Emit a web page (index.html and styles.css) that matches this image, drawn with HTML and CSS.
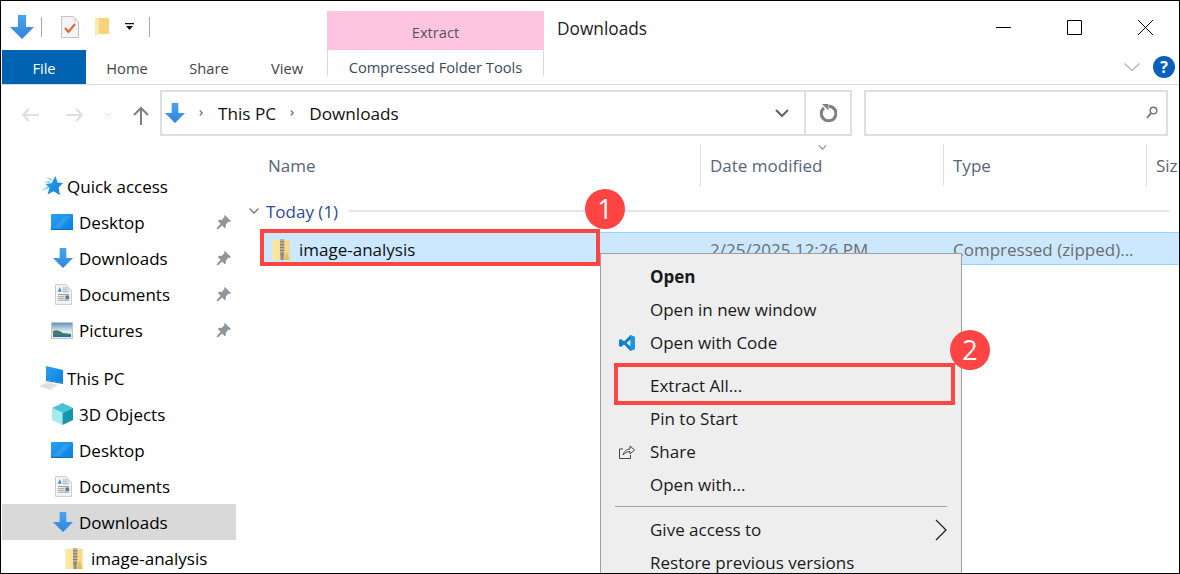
FILE: index.html
```html
<!DOCTYPE html>
<html lang="en">
<head>
  <meta charset="UTF-8">
  <title>Downloads</title>
  <link rel="stylesheet" href="styles.css">
</head>
<body>
<svg class="defs" aria-hidden="true">
  <defs>
    <linearGradient id="blue" x1="0" y1="0" x2="0" y2="1"><stop offset="0" stop-color="#4aa3f0"/><stop offset="1" stop-color="#2f86dc"/></linearGradient>
    <linearGradient id="screen" x1="0" y1="0" x2="1" y2="1"><stop offset="0" stop-color="#2aa2f2"/><stop offset="1" stop-color="#0a7fe0"/></linearGradient>
    <linearGradient id="sky" x1="0" y1="0" x2="0" y2="1"><stop offset="0" stop-color="#5f8fb8"/><stop offset=".55" stop-color="#dfeaf2"/><stop offset="1" stop-color="#dfeaf2"/></linearGradient>
    <linearGradient id="yellow" x1="0" y1="0" x2="1" y2="0"><stop offset="0" stop-color="#fde9a4"/><stop offset="1" stop-color="#f8d77e"/></linearGradient>
    <symbol id="i-down" viewBox="0 0 24 24"><path fill="url(#blue)" d="M8 0h8v12h8L12 24 0 12h8z"/></symbol>
    <symbol id="i-desktop" viewBox="0 0 22 16"><rect width="22" height="16" rx="1" fill="url(#screen)"/><path fill="#4fb4f6" d="M2 14 14 2h6L9 14z" opacity=".35"/><path fill="#0b6fc4" d="M0 15h22v1H0z"/></symbol>
    <symbol id="i-doc" viewBox="0 0 18 22"><path fill="#f5f5f5" stroke="#c9c9c9" d="M.5.5h11l6 6v15H.5z"/><path fill="#d8d8d8" d="M11.500.5v6h6z"/><path fill="#3b8fe0" d="M3 8l2-5 2 5z"/><path stroke="#8aa9c6" d="M8 4h3M8 6h4M8 8h7"/><path stroke="#9a9a9a" d="M3 11h12M3 13h7M3 15h7M3 17h12"/><rect x="11" y="12" width="4" height="4" fill="#4f7f9c"/></symbol>
    <symbol id="i-pics" viewBox="0 0 22 17"><rect x=".5" y=".5" width="21" height="16" fill="url(#sky)" stroke="#c4c4c4"/><path fill="#4a7a58" d="M2 9c4-2 7 0 10 2l8 1v3H2z"/><path fill="#2f6fa0" d="M2 13h18v2H2z"/></symbol>
    <symbol id="i-zip" viewBox="0 0 18 22"><path fill="url(#yellow)" d="M0 1h18v21H0z"/><path fill="#eebf4e" d="M15 13l3 9h-6z"/><rect x="8" y="0" width="4.500" height="22" fill="#b5b0a0"/><path stroke="#7d786c" d="M8 3h4.500M8 6h4.500M8 9h4.500M8 12h4.500"/><circle cx="10.250" cy="16" r="2" fill="#8f8a7e"/><rect x="9.250" y="17" width="2" height="5" fill="#8f8a7e"/></symbol>
    <symbol id="i-pin" viewBox="0 0 16 16"><path fill="#8e979e" d="M9.500 0 16 6.500l-1.300.9-1.200-.4-3 3 .1 2.700-1.300 1.300-2.900-2.900L2 15.500.5 14l4.400-4.700L2 6.400l1.300-1.300 2.700.1 3-3-.4-1.300z"/></symbol>
    <symbol id="i-chev" viewBox="0 0 10 6"><path fill="none" stroke="currentColor" stroke-width="1.300" d="M.5.5 5 5 9.500.5"/></symbol>
    <symbol id="i-crumb" viewBox="0 0 5 8"><path fill="none" stroke="#808080" stroke-width="1.800" d="M1 .8 4 4 1 7.200"/></symbol>
  </defs>
</svg>

<div class="window">
  <header class="ribbon">
    <div class="ribbon-left">
      <div class="qat">
        <svg class="qat-arrow"><use href="#i-down"/></svg>
        <span class="qat-sep"></span>
        <svg class="qat-doc" viewBox="0 0 18 22">
          <path fill="#f4f4f4" stroke="#c4c4c4" d="M.5.5h12l5 5v16H.5z"/>
          <path fill="#dcdcdc" d="M12.500.5v5h5z"/>
          <path fill="none" stroke="#e8622a" stroke-width="2" d="M4 12l3.500 4L14 8"/>
        </svg>
        <svg class="qat-folder" viewBox="0 0 14 20">
          <path fill="#f6d27a" d="M3 1h11v16H3z"/>
          <path fill="#fdeab0" d="M0 0l4 2v14.500L0 20z"/>
        </svg>
        <svg class="qat-drop" viewBox="0 0 9 7"><path d="M0 0h9v1.200H0zM1 3h7L4.500 7z" fill="#111"/></svg>
        <span class="qat-sep qat-sep-last"></span>
      </div>
      <nav class="tabs">
        <span class="tab tab-file">File</span>
        <span class="tab tab-home">Home</span>
        <span class="tab tab-share">Share</span>
        <span class="tab tab-view">View</span>
      </nav>
    </div>
    <div class="ribbon-context">
      <div class="context-title">Extract</div>
      <div class="context-tab">Compressed Folder Tools</div>
    </div>
    <div class="ribbon-right">
      <div class="title-row">
        <span class="title">Downloads</span>
        <div class="controls">
          <svg viewBox="0 0 15 15"><path stroke="#000" d="M0 7.500h15"/></svg>
          <svg viewBox="0 0 15 15"><path fill="none" stroke="#000" d="M.5.500h14v14H.5z"/></svg>
          <svg viewBox="0 0 15 15"><path stroke="#000" d="M0 0l15 15M15 0 0 15"/></svg>
        </div>
      </div>
      <div class="help-row">
        <svg class="ribbon-chev" viewBox="0 0 16 8"><path fill="none" stroke="#b8b8b8" stroke-width="1.500" d="M.5.500 8 7.500 15.500.500"/></svg>
        <span class="help">?</span>
      </div>
    </div>
  </header>

  <div class="address-row">
    <div class="nav-btns">
      <svg class="nav-back" viewBox="0 0 18 14"><path fill="none" stroke="#dedede" stroke-width="2" d="M18 7H2M8 1 2 7l6 6"/></svg>
      <svg class="nav-forward" viewBox="0 0 18 14"><path fill="none" stroke="#dedede" stroke-width="2" d="M0 7h16M10 1l6 6-6 6"/></svg>
      <svg class="nav-recent"><use href="#i-chev"/></svg>
      <svg class="nav-up" viewBox="0 0 16 19"><path fill="none" stroke="#808080" stroke-width="2" d="M8 19V2M1 9l7-7 7 7"/></svg>
    </div>
    <div class="address">
      <svg class="addr-icon"><use href="#i-down"/></svg>
      <svg class="crumb"><use href="#i-crumb"/></svg>
      <span class="addr-text">This PC</span>
      <svg class="crumb"><use href="#i-crumb"/></svg>
      <span class="addr-text">Downloads</span>
      <svg class="addr-drop" viewBox="0 0 14 9"><path fill="none" stroke="#666" stroke-width="2.200" d="M1 1l6 6 6-6"/></svg>
      <div class="refresh">
        <svg viewBox="0 0 18 18"><path fill="none" stroke="#808080" stroke-width="3" d="M5 3.800a7.300 7.300 0 1 0 5-1.600"/><path fill="#808080" d="M3 0h6.500v6.500z"/></svg>
      </div>
    </div>
    <div class="search">
      <svg viewBox="0 0 12 14"><circle cx="7.500" cy="4.500" r="3.300" fill="none" stroke="#777" stroke-width="1.500"/><path stroke="#777" stroke-width="2" d="M5 7l-4 5"/></svg>
    </div>
  </div>

  <div class="main">
    <aside class="tree">
      <div class="tree-group">
        <div class="tree-item tree-root">
          <svg class="ic-star" viewBox="0 0 22 20"><path fill="#8cc6f2" d="M0 15 8 9v3zM2 6l7-1v2zM5 1l6 2-1 2z"/><path fill="url(#screen)" d="M14.500 0l2 6.500 5.500.5-4.500 4.500 1.500 7.500-6.500-3.800-6 3.300 2-7-4-3.500 6-.7z"/></svg>
          Quick access
        </div>
        <div class="tree-item"><svg class="ic-desk"><use href="#i-desktop"/></svg>Desktop<svg class="pin"><use href="#i-pin"/></svg></div>
        <div class="tree-item"><svg class="ic-down"><use href="#i-down"/></svg>Downloads<svg class="pin"><use href="#i-pin"/></svg></div>
        <div class="tree-item"><svg class="ic-doc"><use href="#i-doc"/></svg>Documents<svg class="pin"><use href="#i-pin"/></svg></div>
        <div class="tree-item"><svg class="ic-pics"><use href="#i-pics"/></svg>Pictures<svg class="pin"><use href="#i-pin"/></svg></div>
      </div>
      <div class="tree-group">
        <div class="tree-item tree-root">
          <svg class="ic-pc" viewBox="0 0 24 24"><path fill="url(#screen)" d="M7 0l17 4v13L7 14z"/><path fill="#0b6fc4" d="M7 14l17 3v1L7 15z"/><path fill="#dde1e4" d="M0 20l9-4 10 3-8 5z"/></svg>
          This PC
        </div>
        <div class="tree-item">
          <svg class="ic-3d" viewBox="0 0 21 22"><path fill="#48c3d8" d="M10.500 0 21 5 10.500 10 0 5z"/><path fill="#a6ecec" d="M0 5l10.500 5v12L0 17z"/><path fill="#1396ad" d="M21 5 10.500 10v12L21 17z"/></svg>
          3D Objects
        </div>
        <div class="tree-item"><svg class="ic-desk"><use href="#i-desktop"/></svg>Desktop</div>
        <div class="tree-item"><svg class="ic-doc"><use href="#i-doc"/></svg>Documents</div>
        <div class="tree-item tree-selected"><svg class="ic-down"><use href="#i-down"/></svg>Downloads</div>
        <div class="tree-item tree-child"><svg class="ic-zip"><use href="#i-zip"/></svg>image-analysis</div>
      </div>
    </aside>

    <section class="files">
      <div class="col-heads">
        <span class="col-head col-name">Name</span>
        <span class="col-head col-date">Date modified<svg class="sort"><use href="#i-chev"/></svg></span>
        <span class="col-head col-type">Type</span>
        <span class="col-head col-size">Siz</span>
      </div>
      <div class="group">
        <svg class="group-chev"><use href="#i-chev"/></svg>
        <span class="group-name">Today (1)</span>
        <span class="group-line"></span>
      </div>
      <div class="file-row">
        <span class="file-name"><svg class="ic-zip"><use href="#i-zip"/></svg>image-analysis</span>
        <span class="file-meta">2/25/2025 12:26 PM</span>
        <span class="file-meta">Compressed (zipped)...</span>
      </div>
    </section>
  </div>

  <div class="menu">
    <div class="menu-item menu-bold">Open</div>
    <div class="menu-item">Open in new window</div>
    <div class="menu-item">
      <svg class="menu-icon" viewBox="0 0 16 16"><path fill="#0f7fd0" d="M11.500 0 16 2v12l-4.500 2L5 9.500 2 12 0 11V5l2-1 3 2.500zM11.500 4.500 7.500 8l4 3.500z"/><path fill="#2aa4f0" d="M11.500 0 16 2v12l-4.500 2z" opacity=".6"/></svg>
      Open with Code
    </div>
    <div class="menu-sep menu-sep-hidden"></div>
    <div class="menu-item">Extract All...</div>
    <div class="menu-item">Pin to Start</div>
    <div class="menu-item">
      <svg class="menu-icon" viewBox="0 0 16 14"><path fill="none" stroke="#444" d="M4 4H.5v9.500h11V10"/><path fill="none" stroke="#444" d="M4 10c1-4 4-6 7-6V1l4.500 4L11 9V6.500C8 6.500 6 8 4 10z"/></svg>
      Share
    </div>
    <div class="menu-item">Open with...</div>
    <div class="menu-sep"></div>
    <div class="menu-item">Give access to<svg class="menu-arrow" viewBox="0 0 12 22"><path fill="none" stroke="#222" stroke-width="1.300" d="M1 1l10 10L1 21"/></svg></div>
    <div class="menu-item">Restore previous versions</div>
  </div>

  <div class="callout callout-file"></div>
  <div class="callout callout-extract"></div>
  <span class="badge badge-one">1</span>
  <span class="badge badge-two">2</span>
</div>
</body>
</html>
```

FILE: styles.css
```css
* {
  margin: 0;
  padding: 0;
  box-sizing: border-box;
}
body {
  background: #fff;
  font-family: "Open Sans", "Noto Sans", sans-serif;
  font-size: 17px;
  color: #111;
}
svg {
  display: block;
  flex: none;
}
.defs {
  position: absolute;
  width: 0;
  height: 0;
}
.window {
  position: relative;
  width: 1180px;
  height: 574px;
  border: 1px solid #000;
  overflow: hidden;
  background: #fff;
}

/* ribbon */
.ribbon {
  display: flex;
  height: 84px;
  border-bottom: 1px solid #d9d9d9;
}
.ribbon-left {
  width: 326px;
}
.qat {
  display: flex;
  align-items: center;
  height: 49px;
  padding: 2px 0 0 9px;
}
.qat-arrow {
  width: 24px;
  height: 24px;
}
.qat-sep {
  width: 1px;
  height: 20px;
  margin-left: 7px;
  background: #a8a8a8;
}
.qat-doc {
  width: 18px;
  height: 22px;
  margin-left: 19px;
}
.qat-folder {
  width: 14px;
  height: 20px;
  margin-left: 16px;
}
.qat-drop {
  width: 9px;
  height: 7px;
  margin-left: 16px;
}
.qat-sep-last {
  margin-left: 15px;
}
.tabs {
  display: flex;
  height: 34px;
  padding: 1px 0 0 1px;
  font-size: 14.7px;
  color: #444;
}
.tab {
  display: flex;
  align-items: center;
  justify-content: center;
}
.tab-file {
  width: 84px;
  margin-top: -1px;
  padding-top: 1px;
  background: #0063b1;
  color: #fff;
}
.tab-home {
  width: 82px;
}
.tab-share {
  width: 82px;
}
.tab-view {
  width: 74px;
}
.ribbon-context {
  width: 217px;
  padding-top: 10px;
  font-size: 14.7px;
  text-align: center;
}
.context-title {
  height: 39px;
  padding-top: 11px;
  background: #ffc5e0;
  color: #555;
}
.context-tab {
  height: 26px;
  padding-top: 7px;
  border: solid #d9d9d9;
  border-width: 0 1px;
  color: #3d4a5c;
}
.ribbon-right {
  flex: 1;
}
.title-row {
  display: flex;
  justify-content: space-between;
  height: 49px;
  padding-left: 13px;
}
.title {
  margin-top: 15px;
  font-size: 17.3px;
  line-height: 26px;
  color: #222;
}
.controls {
  display: flex;
  gap: 56px;
  padding: 19px 26px 0 0;
}
.controls svg {
  width: 15px;
  height: 15px;
}
.help-row {
  display: flex;
  justify-content: flex-end;
  gap: 13px;
  padding: 6px 4px 0 0;
}
.ribbon-chev {
  width: 16px;
  height: 8px;
  margin-top: 7px;
}
.help {
  width: 22px;
  height: 22px;
  border-radius: 50%;
  background: #0a5fc0;
  color: #fff;
  font-size: 16px;
  font-weight: 700;
  line-height: 22px;
  text-align: center;
}

/* address bar */
.address-row {
  display: flex;
  height: 58px;
  padding-top: 5px;
}
.nav-btns {
  display: flex;
  align-items: center;
  width: 159px;
  height: 46px;
  padding: 4px 0 0 20px;
}
.nav-back,
.nav-forward {
  width: 18px;
  height: 14px;
}
.nav-forward {
  margin-left: 27px;
}
.nav-recent {
  width: 6px;
  height: 4px;
  margin-left: 21px;
  color: #cfcfcf;
}
.nav-up {
  width: 16px;
  height: 19px;
  margin-left: 22px;
}
.address {
  display: flex;
  align-items: center;
  width: 692px;
  height: 46px;
  padding-left: 3px;
  border: 2px solid #dedede;
  font-size: 17.2px;
}
.addr-icon {
  width: 20px;
  height: 20px;
}
.crumb {
  width: 4px;
  height: 8px;
  margin: 0 15px 0 14px;
}
.addr-text {
  padding-top: 1px;
}
.addr-drop {
  width: 14px;
  height: 9px;
  margin: 0 15px 0 auto;
}
.refresh {
  display: flex;
  align-items: center;
  justify-content: center;
  width: 46px;
  height: 100%;
  border-left: 2px solid #dedede;
}
.refresh svg {
  width: 18px;
  height: 18px;
}
.search {
  display: flex;
  align-items: center;
  justify-content: flex-end;
  width: 304px;
  height: 46px;
  margin-left: 12px;
  padding-right: 8px;
  border: 2px solid #dedede;
}
.search svg {
  width: 12px;
  height: 14px;
}

/* nav pane */
.main {
  display: flex;
}
.tree {
  width: 239px;
  padding: 25px 4px 0 1px;
}
.tree-group + .tree-group {
  margin-top: 12px;
}
.tree-item {
  display: flex;
  align-items: center;
  height: 36px;
  padding-left: 49px;
  color: #000;
}
.tree-root {
  padding-left: 39px;
}
.tree-selected {
  background: #d9d9d9;
}
.tree-child {
  padding-left: 63px;
}
.tree-item > svg:first-child {
  margin-right: 6px;
}
.tree-item > .ic-star:first-child {
  width: 22px;
  height: 20px;
  margin-right: 4px;
}
.tree-item > .ic-pc:first-child {
  width: 24px;
  height: 24px;
  margin-left: -2px;
  margin-right: 4px;
}
.ic-desk {
  width: 22px;
  height: 16px;
}
.ic-down {
  width: 20px;
  height: 20px;
  margin-left: 2px;
}
.tree-item > .ic-doc:first-child {
  width: 17px;
  height: 21px;
  margin-left: 4px;
  margin-right: 7px;
}
.ic-pics {
  width: 22px;
  height: 17px;
}
.ic-3d {
  width: 21px;
  height: 22px;
  margin-left: 1px;
}
.ic-zip {
  width: 18px;
  height: 21px;
}
.tree-item > .ic-zip:first-child {
  margin-right: 8px;
}
.tree-item > .pin {
  width: 15px;
  height: 15px;
  margin-left: auto;
  margin-right: 5px;
}

/* file list */
.files {
  flex: 1;
}
.col-heads {
  display: grid;
  grid-template-columns: 461px 243px 203px 1fr;
  height: 42px;
  margin-top: 1px;
  color: #56657a;
}
.col-head {
  display: flex;
  align-items: center;
  padding-left: 9px;
  border-right: 1px solid #e2e2e2;
  position: relative;
  white-space: nowrap;
  overflow: hidden;
}
.col-name {
  padding-left: 28px;
}
.col-size {
  border-right: 0;
}
.sort {
  position: absolute;
  top: 1px;
  left: 117px;
  width: 9px;
  height: 5px;
  color: #8a8a8a;
}
.group {
  display: flex;
  align-items: center;
  height: 24px;
  margin-top: 13px;
  padding-left: 9px;
}
.group-chev {
  width: 10px;
  height: 6px;
  color: #777;
}
.group-name {
  margin-left: 7px;
  color: #2a4a9a;
}
.group-line {
  flex: 1;
  height: 2px;
  margin: 0 10px 0 11px;
  background: #e4e4e4;
}
.file-row {
  display: grid;
  grid-template-columns: 439px 243px 1fr;
  align-items: center;
  height: 33px;
  margin: 9px 0 0 22px;
  padding-top: 2px;
  background: #cce8ff;
  border: solid #99d1ff;
  border-width: 1px 0;
}
.file-name {
  display: flex;
  align-items: center;
  gap: 9px;
  padding-left: 10px;
}
.file-meta {
  padding-left: 9px;
  color: #6d6d6d;
  white-space: nowrap;
}

/* context menu */
.menu {
  position: absolute;
  top: 252px;
  left: 599px;
  width: 362px;
  height: 340px;
  padding-top: 6px;
  background: #eee;
  border: 1px solid #a0a0a0;
  color: #1a1a1a;
}
.menu-item {
  display: flex;
  align-items: center;
  position: relative;
  height: 33px;
  padding-left: 49px;
}
.menu-bold {
  font-weight: 700;
}
.menu-icon {
  position: absolute;
  left: 18px;
  width: 16px;
  height: 16px;
}
.menu-sep {
  height: 1px;
  margin: 5px 14px 6px 14px;
  background: #a0a0a0;
}
.menu-sep-hidden {
  margin: 4px 14px 5px 14px;
}
.menu-arrow {
  position: absolute;
  right: 14px;
  width: 12px;
  height: 22px;
}

/* annotations */
.callout {
  position: absolute;
  border: 4px solid #ff4444;
}
.callout-file {
  top: 228px;
  left: 259px;
  width: 340px;
  height: 37px;
}
.callout-extract {
  top: 362px;
  left: 613px;
  width: 341px;
  height: 42px;
}
.badge {
  position: absolute;
  width: 40px;
  height: 40px;
  border-radius: 50%;
  background: #ff4444;
  color: #fff;
  font-size: 27px;
  line-height: 40px;
  text-align: center;
}
.badge-one {
  top: 188px;
  left: 584px;
}
.badge-two {
  top: 329px;
  left: 949px;
}
```
